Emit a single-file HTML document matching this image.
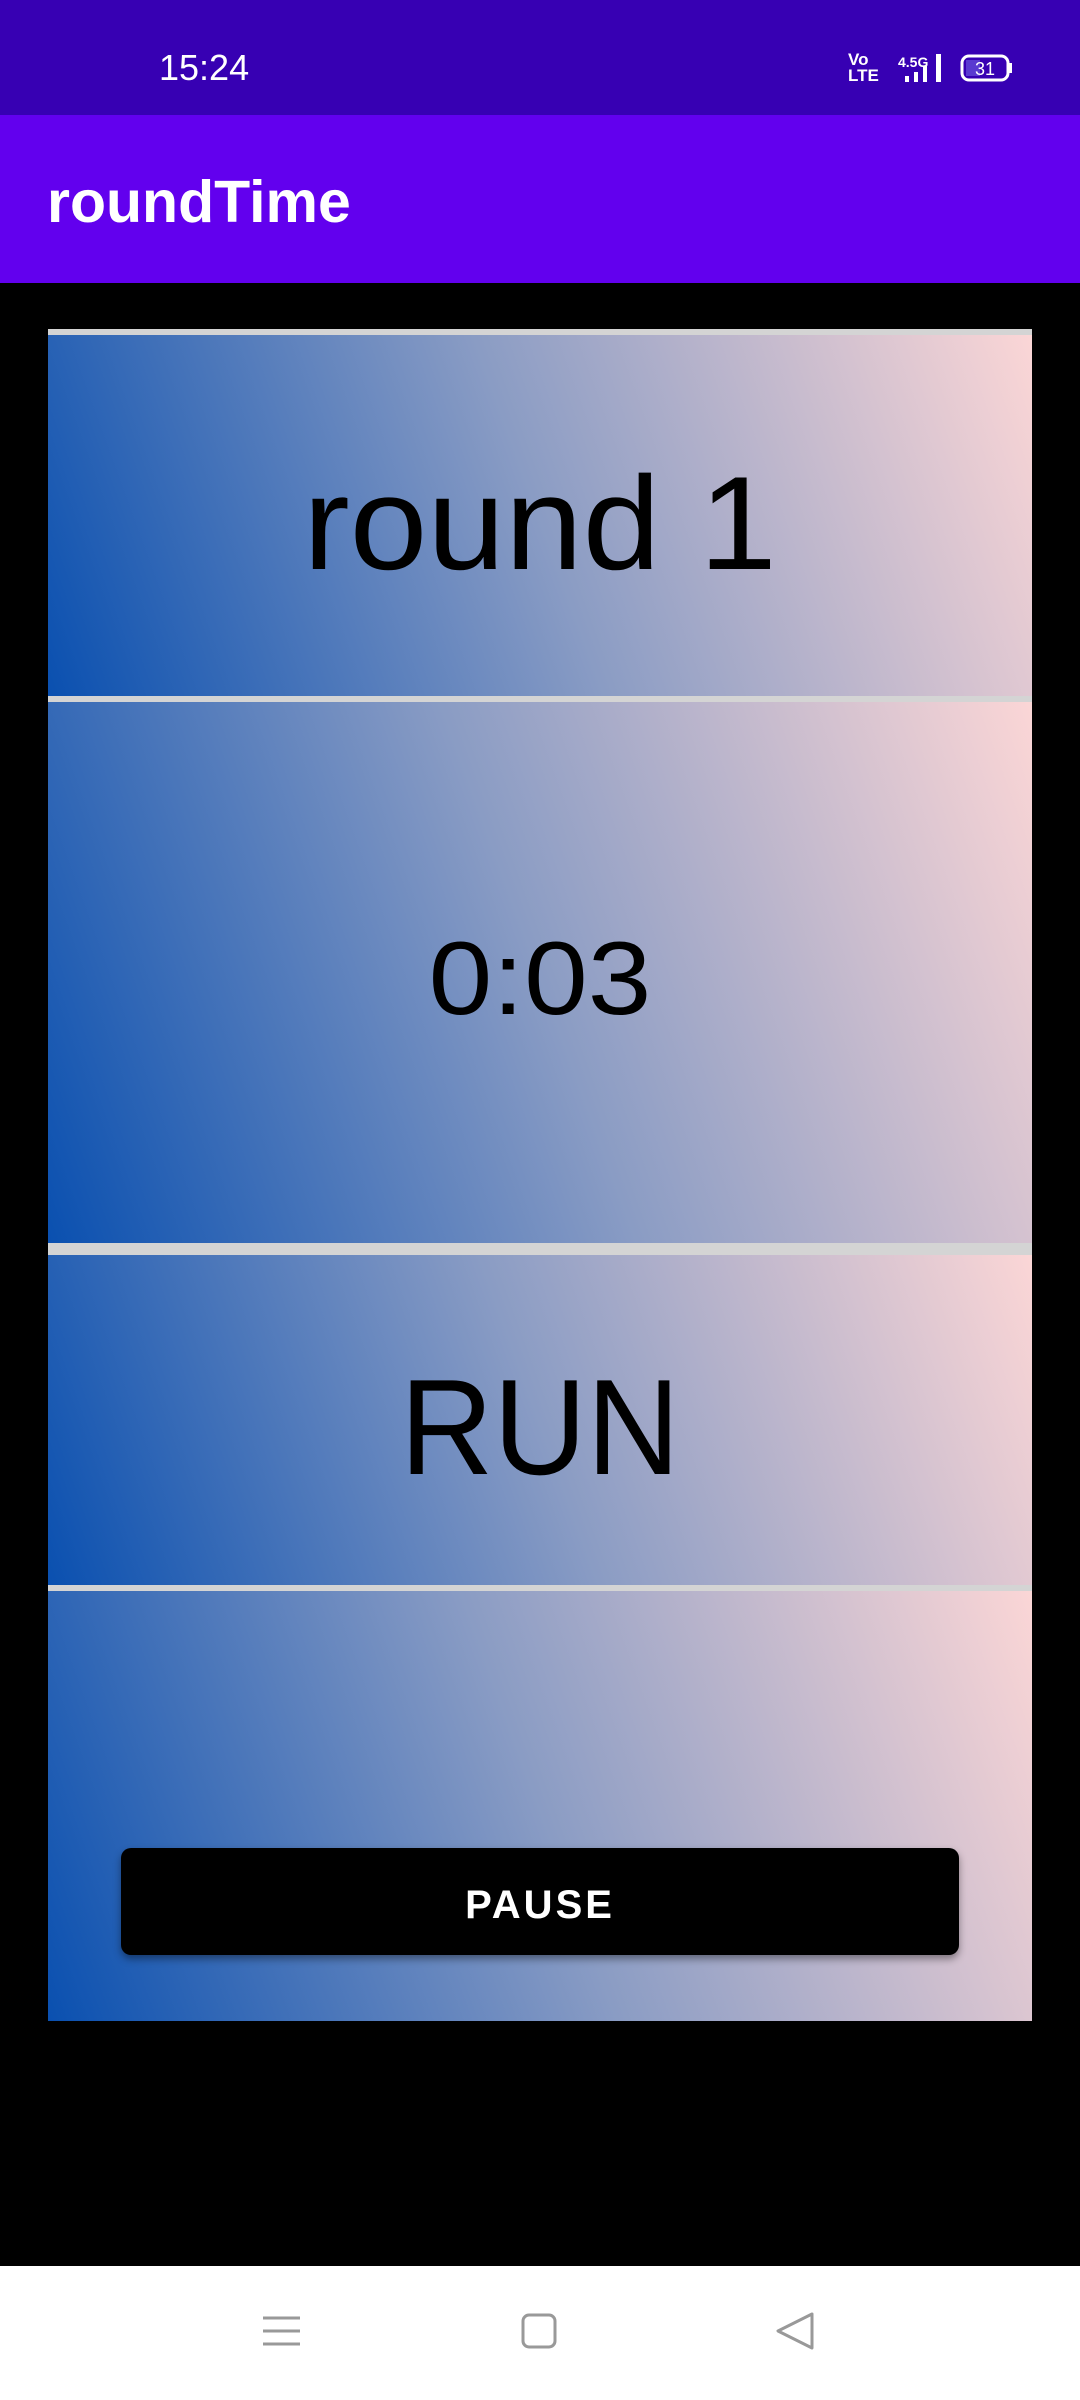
<!DOCTYPE html>
<html><head><meta charset="utf-8"><style>
*{margin:0;padding:0;box-sizing:border-box}
body{width:1080px;height:2400px;background:#000;position:relative;overflow:hidden;font-family:"Liberation Sans",sans-serif}
.abs{position:absolute}
.sec{position:absolute;left:48px;width:984px;background:linear-gradient(70deg,#0a50b0 0%,#8a9cc4 50%,#fbd6d6 100%)}
.line{position:absolute;left:48px;width:984px;background:#d4d4d4}
.big{position:absolute;left:0;width:984px;text-align:center;color:#000;line-height:1}
</style></head><body>
<div class="abs" style="left:0;top:0;width:1080px;height:115px;background:#3700b3"></div>
<div class="abs" style="left:159px;top:47px;color:#fff;font-size:36px;">15:24</div>
<div class="abs" style="left:848px;top:52px;color:#fff;font-size:17px;font-weight:bold;line-height:16px;">Vo<br>LTE</div>
<div class="abs" style="left:898px;top:54px;color:#fff;font-size:14px;font-weight:bold;">4.5G</div>
<svg class="abs" style="left:900px;top:52px" width="60" height="32"><rect x="5" y="24" width="4" height="6" fill="#fff"/><rect x="14" y="20" width="4" height="10" fill="#fff"/><rect x="23" y="14" width="4" height="16" fill="#fff"/><rect x="36" y="2" width="5" height="28" fill="#fff"/></svg>
<svg class="abs" style="left:960px;top:54px" width="54" height="28"><rect x="2" y="2" width="46" height="24" rx="7" fill="none" stroke="#fff" stroke-width="3"/><rect x="6" y="6" width="14" height="16" fill="#5a3ad0"/><rect x="49" y="9" width="3" height="10" fill="#fff"/><text x="25" y="21" text-anchor="middle" fill="#fff" font-size="18" font-family="Liberation Sans">31</text></svg>
<div class="abs" style="left:0;top:115px;width:1080px;height:168px;background:#6200ee"></div>
<div class="abs" style="left:47px;top:168px;color:#fff;font-size:59px;font-weight:bold;">roundTime</div>

<div class="line" style="top:329px;height:6px"></div>
<div class="sec" style="top:335px;height:361px"><div class="big" style="top:123px;font-size:133px;transform:scaleX(1.05)">round 1</div></div>
<div class="line" style="top:696px;height:6px"></div>
<div class="sec" style="top:702px;height:541px"><div class="big" style="top:225px;font-size:104px;transform:scaleX(1.1)">0:03</div></div>
<div class="line" style="top:1243px;height:12px"></div>
<div class="sec" style="top:1255px;height:330px"><div class="big" style="top:104px;font-size:136px;transform:scaleX(0.95)">RUN</div></div>
<div class="line" style="top:1585px;height:6px"></div>
<div class="sec" style="top:1591px;height:430px">
<div class="abs" style="left:73px;top:257px;width:838px;height:107px;background:#000;border-radius:10px;box-shadow:0 4px 8px rgba(0,0,0,.4);color:#fff;font-weight:bold;font-size:40px;letter-spacing:3px;text-align:center;line-height:115px">PAUSE</div>
</div>

<div class="abs" style="left:0;top:2266px;width:1080px;height:134px;background:#fff"></div>
<svg class="abs" style="left:0;top:2296px" width="1080" height="70">
<g stroke="#999" stroke-width="3" fill="none">
<line x1="263" y1="22" x2="300" y2="22"/><line x1="263" y1="35" x2="300" y2="35"/><line x1="263" y1="48" x2="300" y2="48"/>
<rect x="523" y="19" width="32" height="32" rx="6"/>
<path d="M812 18 L778 35 L812 52 Z" stroke-linejoin="round"/>
</g></svg>
</body></html>
